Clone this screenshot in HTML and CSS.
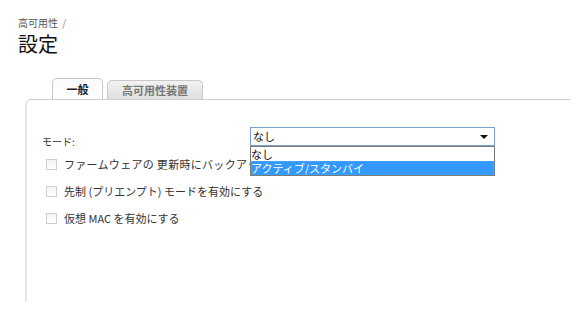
FILE: index.html
```html
<!DOCTYPE html>
<html lang="ja">
<head>
<meta charset="utf-8">
<link rel="stylesheet" href="styles.css">
</head>
<body>
<div class="page">
  <div class="crumb">高可用性 <span class="sep">/</span></div>
  <h1 class="title">設定</h1>
  <div class="tabs">
    <div class="tab active">一般</div>
    <div class="tab">高可用性装置</div>
  </div>
  <div class="panel">
    <div class="mode-row">
      <div class="mode-label">モード:</div>
      <div class="select-wrap">
        <div class="select"><span>なし</span><span class="arrow"></span></div>
        <div class="dropdown">
          <div class="opt">なし</div>
          <div class="opt sel">アクティブ/スタンバイ</div>
        </div>
      </div>
    </div>
    <div class="check-row"><span class="box"></span><span class="lbl clipped">ファームウェアの 更新時にバックアップ設定を同期する</span></div>
    <div class="check-row"><span class="box"></span><span class="lbl">先制 (プリエンプト) モードを有効にする</span></div>
    <div class="check-row"><span class="box"></span><span class="lbl">仮想 MAC を有効にする</span></div>
  </div>
</div>
</body>
</html>
```
FILE: styles.css
```css
html, body {
  margin: 0;
  padding: 0;
  background: #fff;
  overflow: hidden;
}
body {
  font-family: "Noto Sans CJK JP", "Noto Sans", sans-serif;
  color: #333;
  width: 576px;
  height: 318px;
}
.page {
  padding: 16px 0 0 18px;
}
.crumb {
  font-size: 10px;
  line-height: 13px;
  color: #555;
}
.crumb .sep {
  color: #7a8aa8;
  margin-left: 2px;
}
.title {
  margin: 3px 0 0 0;
  font-size: 20px;
  line-height: 24px;
  font-weight: normal;
  color: #111;
}
.tabs {
  display: flex;
  gap: 4px;
  margin: 22px 0 0 34px;
  height: 21px;
  align-items: flex-end;
}
.tab {
  height: 19px;
  box-sizing: border-box;
  border: 1px solid #c8c8c8;
  border-bottom: none;
  border-radius: 5px 5px 0 0;
  background: linear-gradient(#f2f2f2, #dedede);
  font-size: 11px;
  font-weight: bold;
  color: #777;
  line-height: 18px;
  padding: 0 11px;
  text-align: center;
}
.tab.active {
  width: 51px;
  height: 21px;
  line-height: 20px;
  background: linear-gradient(#fafafa, #fff);
  color: #222;
}
.tabs .tab:nth-child(2) {
  width: 96px;
}
.panel {
  margin-left: 7px;
  width: 545px;
  height: 203px;
  box-sizing: border-box;
  border-top: 1px solid #cfcfcf;
  border-left: 2px solid #e6e6e6;
  border-top-left-radius: 6px;
  padding: 27px 0 0 15px;
}
.mode-row {
  display: flex;
  align-items: center;
  height: 19px;
}
.mode-label {
  width: 208px;
  font-size: 10px;
  color: #333;
  padding-top: 10px;
}
.select-wrap {
  position: relative;
  width: 245px;
}
.select {
  box-sizing: border-box;
  height: 19px;
  border: 1px solid #7aa0c8;
  background: #fff;
  font-size: 11px;
  line-height: 17px;
  color: #111;
  padding-left: 2px;
  display: flex;
  justify-content: space-between;
  align-items: center;
}
.arrow {
  width: 0;
  height: 0;
  border-left: 4px solid transparent;
  border-right: 4px solid transparent;
  border-top: 4px solid #111;
  margin-right: 6px;
}
.dropdown {
  position: absolute;
  left: 0;
  top: 19px;
  width: 245px;
  box-sizing: border-box;
  border: 1px solid #7a7a7a;
  background: #fff;
  z-index: 2;
}
.opt {
  font-size: 11px;
  line-height: 14px;
  height: 14px;
  color: #111;
}
.opt.sel {
  background: #3399ff;
  color: #fff;
  outline: 1px dotted #e58a2a;
  outline-offset: -1px;
}
.check-row {
  display: flex;
  align-items: center;
  height: 18px;
  margin-top: 9px;
  padding-left: 4px;
}
.box {
  flex: none;
  width: 11px;
  height: 11px;
  box-sizing: border-box;
  border: 1px solid #cfcfcf;
  background: linear-gradient(#f4f4f4, #fff);
  margin-right: 7px;
}
.lbl {
  font-size: 11px;
  color: #333;
  white-space: nowrap;
}
.lbl.clipped {
  display: block;
  width: 186px;
  overflow: hidden;
  letter-spacing: 0.3px;
}
```
